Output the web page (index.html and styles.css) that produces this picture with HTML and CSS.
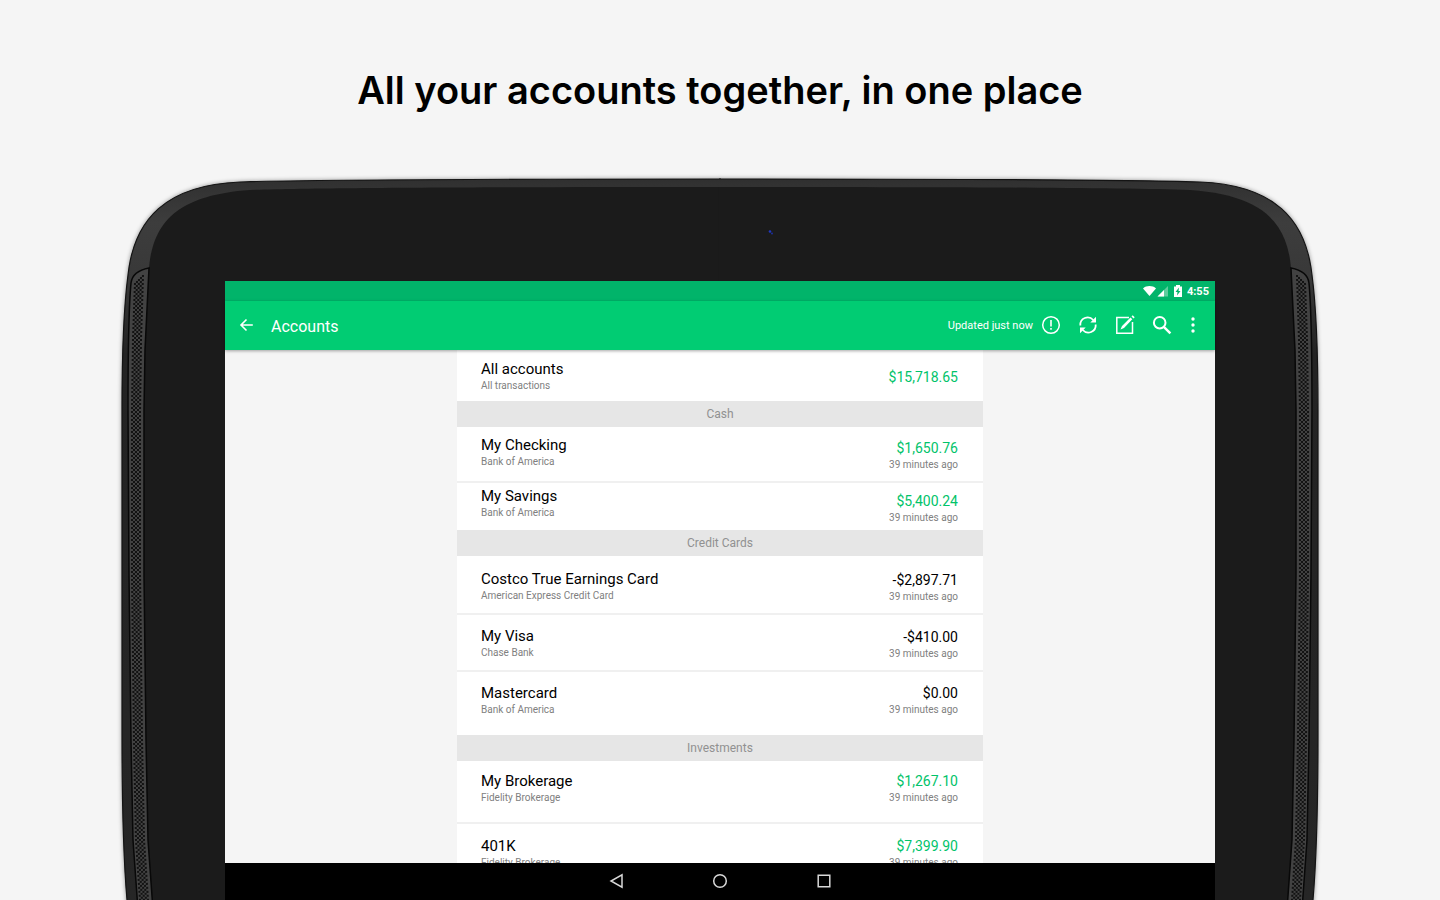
FILE: index.html
```
<!DOCTYPE html>
<html lang="en">
<head>
  <meta charset="UTF-8" />
  <meta name="viewport" content="width=device-width, initial-scale=1.0"/>
  <title>Accounts</title>
  <link rel="stylesheet" href="styles.css">
</head>
<body>

  <h1>All your accounts together, in one place</h1>

  <div class="tablet">

    <!-- Tablet body, drawn once per side and mirrored -->
    <svg class="tablet-frame" viewBox="0 0 1200 725" preserveAspectRatio="none" aria-hidden="true">
      <defs>
        <linearGradient id="shell" x1="0" y1="0" x2="0" y2="1">
          <stop offset="0" stop-color="#303030"/>
          <stop offset="0.06" stop-color="#3d3d3d"/>
          <stop offset="0.14" stop-color="#383838"/>
          <stop offset="0.24" stop-color="#232323"/>
          <stop offset="1" stop-color="#262626"/>
        </linearGradient>
        <g id="side">
          <path d="M601 735H8L7 725C4 690 2 640 2 560V235C2 170 4 130 8 100C14 44 46 10 120 7C200 4.500 400 4 601 4Z" fill="url(#shell)"/>
          <path d="M8 735L7 725C4 690 2 640 2 560V235C2 170 4 130 8 100C14 44 46 10 120 7C200 4.500 400 4 601 4" fill="none" stroke="#141414" stroke-width="1.200"/>
          <path d="M601 735H33L28 665L26 565L24 400V235L25 175L29 93C33 45 60 20 130 15C200 12.500 400 12 601 12Z" fill="#1b1b1b"/>
          <path d="M29 93C18 95 12 100 11 108C8 140 8 180 8 235L9 400L11 565L13 665L18 735H33L28 665L26 565L24 400V235L25 175Z" fill="#424242" stroke="#080808" stroke-width="1.500"/>
          <g fill="none" stroke="#121212" stroke-width="2" stroke-dasharray="2 2">
            <path d="M15 108L13 164L12 236V400L14 565L16 665L20 725"/>
            <path d="M17 106L15 164L14 236V400L16 565L18 665L22 725"/>
            <path d="M19 104L17 164L16 236V400L18 565L20 665L24 725"/>
            <path d="M21 102L19 164L18 236V400L20 565L22 665L26 725"/>
            <path d="M23 100L21 164L20 236V400L22 565L24 665L28 725"/>
          </g>
        </g>
      </defs>
      <use href="#side"/>
      <use href="#side" transform="translate(1200 0) scale(-1 1)"/>
      <circle cx="650" cy="56.500" r="1.300" fill="#2038c0"/>
      <circle cx="652" cy="58.500" r="1" fill="#1c2f9c"/>
    </svg>

    <div class="screen">
      <div class="status-bar">
        <svg width="26" height="12" viewBox="0 0 26 12" aria-hidden="true">
          <path d="M0 3.500C3.500 0.300 9.500 0.300 13 3.500L6.500 11Z" fill="#fff"/>
          <path d="M14.500 11.500L25 1V11.500Z" fill="#5fcd9e"/>
          <path d="M14.500 11.500L21 5V11.500Z" fill="#fff"/>
        </svg>
        <svg width="8" height="12" viewBox="0 0 8 12" aria-hidden="true">
          <path d="M0 1.500H2V0H6V1.500H8V12H0Z" fill="#fff"/>
          <path d="M5 2.500L1.500 7H3.500L3 10.500L6.500 6H4.500Z" fill="#01b46a"/>
        </svg>
        <span>4:55</span>
      </div>

      <header class="toolbar">
        <a class="back" href="#" aria-label="Back">
          <svg width="18" height="18" viewBox="0 0 18 18"><path d="M15.800 9H4.500M9.500 3.500L4 9L9.500 14.500" fill="none" stroke="#fff" stroke-width="1.600"/></svg>
        </a>
        <h2>Accounts</h2>
        <div class="updated">
          <span>Updated just now</span>
          <button aria-label="Status">
            <svg width="24" height="24" viewBox="0 0 24 24"><circle cx="12" cy="12" r="8.300" fill="none" stroke="#fff" stroke-width="1.500"/><path d="M12 7V13.500M12 15V16.800" stroke="#fff" stroke-width="1.600"/></svg>
          </button>
        </div>
        <button aria-label="Refresh">
          <svg width="24" height="24" viewBox="0 0 24 24">
            <path d="M4.300 12.500C3.800 5 12.500 1.800 17.300 7M19.700 11.500C20.200 19 11.500 22.200 6.700 17" fill="none" stroke="#fff" stroke-width="1.800"/>
            <path d="M20 3.800V9.500H14.300ZM4 20.200V14.500H9.700Z" fill="#fff"/>
          </svg>
        </button>
        <button aria-label="Add transaction">
          <svg width="24" height="24" viewBox="0 0 24 24">
            <path d="M16 4.500H3.800V20.200H19.500V9" fill="none" stroke="#fff" stroke-width="1.500"/>
            <path d="M7.500 16.500L9 13L17.500 4.500L19.300 6.300L11 15ZM18.500 3.500L19.700 2.300L21.700 4.300L20.500 5.500Z" fill="#fff"/>
          </svg>
        </button>
        <button aria-label="Search">
          <svg width="24" height="24" viewBox="0 0 24 24"><circle cx="9.700" cy="9.700" r="5.800" fill="none" stroke="#fff" stroke-width="2"/><path d="M13.800 13.800L20.400 20.400" stroke="#fff" stroke-width="2.400"/></svg>
        </button>
        <button class="more" aria-label="More options">
          <svg width="12" height="24" viewBox="0 0 12 24"><g fill="#fff"><circle cx="6" cy="6" r="1.700"/><circle cx="6" cy="12" r="1.700"/><circle cx="6" cy="18" r="1.700"/></g></svg>
        </button>
      </header>

      <main class="content">
        <div class="accounts">
          <div class="row total">
            <div class="name"><strong>All accounts</strong><small>All transactions</small></div>
            <div class="balance positive"><strong>$15,718.65</strong></div>
          </div>

          <h3>Cash</h3>
          <div class="row checking">
            <div class="name"><strong>My Checking</strong><small>Bank of America</small></div>
            <div class="balance positive"><strong>$1,650.76</strong><small>39 minutes ago</small></div>
          </div>
          <div class="row savings">
            <div class="name"><strong>My Savings</strong><small>Bank of America</small></div>
            <div class="balance positive"><strong>$5,400.24</strong><small>39 minutes ago</small></div>
          </div>

          <h3>Credit Cards</h3>
          <div class="row costco">
            <div class="name"><strong>Costco True Earnings Card</strong><small>American Express Credit Card</small></div>
            <div class="balance"><strong>-$2,897.71</strong><small>39 minutes ago</small></div>
          </div>
          <div class="row visa">
            <div class="name"><strong>My Visa</strong><small>Chase Bank</small></div>
            <div class="balance"><strong>-$410.00</strong><small>39 minutes ago</small></div>
          </div>
          <div class="row mastercard">
            <div class="name"><strong>Mastercard</strong><small>Bank of America</small></div>
            <div class="balance"><strong>$0.00</strong><small>39 minutes ago</small></div>
          </div>

          <h3>Investments</h3>
          <div class="row brokerage">
            <div class="name"><strong>My Brokerage</strong><small>Fidelity Brokerage</small></div>
            <div class="balance positive"><strong>$1,267.10</strong><small>39 minutes ago</small></div>
          </div>
          <div class="row retirement">
            <div class="name"><strong>401K</strong><small>Fidelity Brokerage</small></div>
            <div class="balance positive"><strong>$7,399.90</strong><small>39 minutes ago</small></div>
          </div>
        </div>
      </main>

      <!-- Android navigation buttons -->
      <nav class="nav-bar">
        <button aria-label="Back"><svg width="16" height="16" viewBox="0 0 16 16"><path d="M14 1.800V14.200L3 8Z"/></svg></button>
        <button aria-label="Home"><svg width="16" height="16" viewBox="0 0 16 16"><circle cx="8" cy="8" r="6.300"/></svg></button>
        <button aria-label="Recent apps"><svg width="16" height="16" viewBox="0 0 16 16"><path d="M2.200 2.200H13.800V13.800H2.200Z"/></svg></button>
      </nav>
    </div>
  </div>

</body>
</html>
```
FILE: styles.css
```
* {
  box-sizing: border-box;
}

body {
  margin: 0;
  height: 100vh;
  display: flex;
  flex-direction: column;
  align-items: center;
  overflow: hidden;
  background: #f5f5f5;
  color: #000;
  font-family: Roboto, sans-serif;
}

h1 {
  margin: 0;
  padding: 66px 0 61px;
  font-family: Inter, sans-serif;
  font-size: 38px;
  font-weight: 600;
  line-height: 48px;
  text-align: center;
}

button {
  display: flex;
  padding: 0;
  border: none;
  background: none;
  cursor: pointer;
}

/* Tablet */
.tablet {
  position: relative;
  flex: 1;
  min-height: 0;
  width: 83.3333%;
  display: flex;
  justify-content: center;
  padding-top: 106px;
}

/* The frame lies behind the screen */
.tablet-frame {
  position: absolute;
  inset: 0;
  width: 100%;
  height: 100%;
  overflow: visible;
  filter: drop-shadow(0 0 2px rgba(0, 0, 0, 0.4));
}

.screen {
  position: relative;
  width: 82.5%;
  display: flex;
  flex-direction: column;
  background: #f5f5f5;
}

/* Status bar */
.status-bar {
  height: 20px;
  flex-shrink: 0;
  display: flex;
  align-items: center;
  justify-content: flex-end;
  gap: 5px;
  padding-right: 6px;
  background: #01b46a;
  color: #fff;
  font-size: 11px;
  font-weight: 700;
}

/* Toolbar */
.toolbar {
  z-index: 1;
  height: 49px;
  flex-shrink: 0;
  display: flex;
  align-items: center;
  gap: 13px;
  padding: 0 16px 2px 12px;
  background: #01cc73;
  color: #fff;
  box-shadow: 0 1px 3px rgba(0, 0, 0, 0.35);
}

.back {
  display: flex;
}

.toolbar h2 {
  flex: 1;
  margin: 0;
  padding: 3px 3px 0;
  font-size: 16px;
  font-weight: 400;
}

.updated {
  display: flex;
  align-items: center;
  gap: 6px;
  font-size: 11px;
}

.updated span {
  padding-top: 2px;
}

/* Accounts list */
.content {
  flex: 1;
  min-height: 0;
  overflow: hidden;
}

.accounts {
  width: 53.1313%;
  margin: 0 auto;
  background: #fff;
}

.accounts h3 {
  margin: 0;
  padding-top: 1px;
  background: #e6e6e6;
  color: #919191;
  font-size: 12px;
  font-weight: 400;
  line-height: 25px;
  text-align: center;
}

.row {
  display: flex;
  justify-content: space-between;
  padding: 13px 25px 8px 24px;
}

.row + .row {
  border-top: 2px solid #f0f0f0;
}

.name,
.balance {
  display: flex;
  flex-direction: column;
}

.balance {
  align-self: flex-end;
  text-align: right;
}

.row strong {
  font-size: 15px;
  font-weight: 400;
  line-height: 16px;
}

.row .balance strong {
  font-size: 14px;
}

.row small {
  padding-top: 1px;
  color: #808080;
  font-size: 10px;
  line-height: 16px;
}

.row .positive strong {
  color: #01c36a;
}

/* Row heights */
.total {
  height: 51px;
  padding-top: 11px;
}

.total .balance {
  align-self: center;
}

.checking {
  height: 54px;
  padding-top: 10px;
}

.savings {
  height: 49px;
  padding-top: 5px;
  padding-bottom: 4px;
}

.costco {
  height: 57px;
  padding-top: 15px;
}

.visa {
  height: 57px;
}

.mastercard {
  height: 65px;
  padding-bottom: 17px;
}

.brokerage {
  height: 61px;
  padding-top: 12px;
  padding-bottom: 16px;
}

.retirement {
  padding-top: 14px;
}

/* Navigation bar */
.nav-bar {
  height: 37px;
  flex-shrink: 0;
  display: flex;
  align-items: center;
  justify-content: center;
  gap: 88px;
  padding-bottom: 1px;
  background: #000;
}

.nav-bar svg {
  fill: none;
  stroke: #d8d8d8;
  stroke-width: 1.5px;
}
```
